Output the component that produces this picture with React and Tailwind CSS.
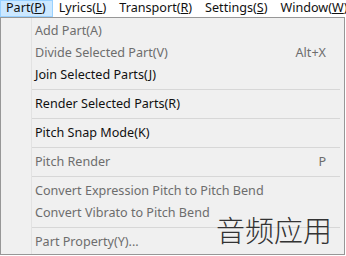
export default function App() {
  const menus = [
    ['Part', 'P'],
    ['Lyrics', 'L'],
    ['Transport', 'R'],
    ['Settings', 'S'],
    ['Window', 'W'],
  ];

  const items = [
    { label: 'Add Part(A)', disabled: true },
    { label: 'Divide Selected Part(V)', disabled: true, key: 'Alt+X' },
    { label: 'Join Selected Parts(J)' },
    { sep: true },
    { label: 'Render Selected Parts(R)' },
    { sep: true },
    { label: 'Pitch Snap Mode(K)' },
    { sep: true },
    { label: 'Pitch Render', disabled: true, key: 'P' },
    { sep: true },
    { label: 'Convert Expression Pitch to Pitch Bend', disabled: true },
    { label: 'Convert Vibrato to Pitch Bend', disabled: true },
    { sep: true },
    { label: 'Part Property(Y)...', disabled: true },
  ];

  return (
    <div
      className="w-[346px] h-[256px] bg-white overflow-hidden relative text-[12.6px] leading-none"
      style={{ fontFamily: '"Noto Sans", "Noto Sans CJK SC", sans-serif' }}
    >
      {/* menu bar */}
      <div className="flex h-[17px] items-stretch whitespace-nowrap text-[#111]">
        {menus.map(([name, k], i) => (
          <div
            key={name}
            className={
              'flex items-center pl-[5px] pr-[6px] ' +
              (i === 0 ? 'bg-[#cce8ff] border border-[#99d1ff]' : 'border border-transparent')
            }
          >
            {name}(<span className="underline">{k}</span>)
          </div>
        ))}
      </div>

      {/* dropdown */}
      <div className="w-[345px] h-[238px] bg-[#f0f0f0] border border-[#979797] flex">
        <div className="w-[31px] shrink-0 border-r border-[#e2e2e2]" />
        <div className="flex-1 flex flex-col pt-[2px] whitespace-nowrap">
          {items.map((it, i) =>
            it.sep ? (
              <div key={i} className="h-[7px] flex items-center">
                <div className="w-[308px] h-px bg-[#d7d7d7]" />
              </div>
            ) : (
              <div
                key={i}
                className={
                  'h-[22px] flex items-center pl-[3px] pr-[18px] ' +
                  (it.disabled ? 'text-[#6d6d6d]' : 'text-[#111]')
                }
              >
                <span className="flex-1">{it.label}</span>
                {it.key && <span>{it.key}</span>}
              </div>
            )
          )}
        </div>
      </div>

      {/* watermark */}
      <div
        className="absolute left-[216px] top-[215px] text-[29px] font-extralight text-[#333]"
        style={{ fontFamily: '"Noto Sans CJK SC", sans-serif' }}
      >
        音频应用
      </div>
    </div>
  );
}
